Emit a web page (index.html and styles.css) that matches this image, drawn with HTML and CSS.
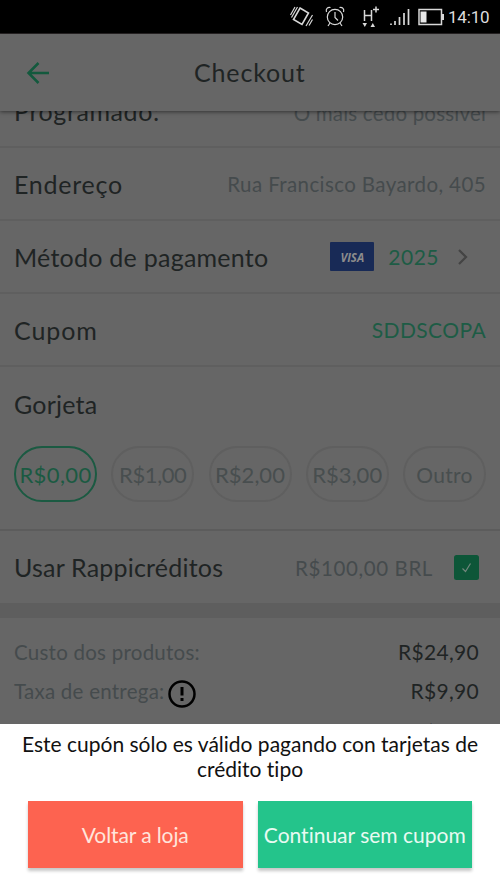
FILE: index.html
```html
<!DOCTYPE html>
<html lang="pt-BR">
<head>
<meta charset="utf-8">
<title>Checkout</title>
<link rel="stylesheet" href="styles.css">
</head>
<body>
<div class="phone">
  <div class="status">
    <svg class="status-icons" width="164" height="34" viewBox="0 0 164 34" fill="none" stroke="#d8d8d8" stroke-width="1.2">
      <path d="M20 8l8.500 5-6.500 11.500-8.500-5z" stroke-width="1.600"/><path d="M17.500 7l-6 10.500M15 7l-4.500 8M26 26l6.500-11M29 25.500l3.500-6"/>
      <circle cx="55" cy="17" r="7.700"/><path d="M55 12v5.500l3 3M46.500 12c-1-3 1-5 4-4.500M63.500 12c1-3-1-5-4-4.500M50 23l-2 3M60 23l2 3"/>
      <path d="M84.500 10v11M91.500 10v11M84.500 15.500h7M96 6.500v6M93 9.500h6" stroke-width="1.500"/>
      <path d="M82.500 23h4.500l-2.200 4zM90.500 27h4.500l-2.200-4z" fill="#d8d8d8" stroke="none"/>
      <path d="M111 23.500v1.500M115 21v4M119.500 17v8M124 13v12M128.500 9v16" stroke-width="1.700"/>
      <path d="M139 9.500h22.500v15H139z" stroke-width="1.500"/><path d="M140.500 11.500h6v11h-6z" fill="#e8e8e8" stroke="none"/><path d="M163 14v6" stroke-width="2"/>
    </svg>
    <span class="clock">14:10</span>
  </div>
  <header class="header">
    <svg class="back" width="24" height="24" viewBox="0 0 24 24" fill="none" stroke="#13593d" stroke-width="2.500"><path d="M12.500 2L2.500 12l10 10M2.500 12H23"/></svg>
    <h1 class="title">Checkout</h1>
  </header>
  <main class="content">
    <div class="row first"><span class="label programado">Programado:</span><span class="value early">O mais cedo possível</span></div>
    <div class="row"><span class="label endereco">Endereço</span><span class="value address">Rua Francisco Bayardo, 405</span></div>
    <div class="row"><span class="label metodo">Método de pagamento</span>
      <span class="visa">VISA</span><span class="value green year">2025</span>
      <svg class="chevron" width="12" height="18" viewBox="0 0 12 18" fill="none" stroke="#444" stroke-width="2.200"><path d="M2 2l7 7-7 7"/></svg>
    </div>
    <div class="row"><span class="label cupom">Cupom</span><span class="value green code">SDDSCOPA</span></div>
    <section class="tips">
      <h2 class="label gorjeta">Gorjeta</h2>
      <div class="pills">
        <span class="pill selected">R$0,00</span><span class="pill one">R$1,00</span><span class="pill">R$2,00</span><span class="pill">R$3,00</span><span class="pill other">Outro</span>
      </div>
    </section>
    <div class="row credits"><span class="label">Usar Rappicréditos</span><span class="value amount">R$100,00 BRL</span>
      <svg class="check" width="25" height="25" viewBox="0 0 25 25"><rect width="25" height="25" rx="2.500" fill="#0d5638"/><path d="M8.500 13.500l3 3 5-8" fill="none" stroke="#72867d" stroke-width="1.200"/></svg>
    </div>
    <div class="divider"></div>
    <div class="costs">
      <div class="cost"><span class="name">Custo dos produtos:</span><span class="price">R$24,90</span></div>
      <div class="cost"><span class="name">Taxa de entrega:</span>
        <svg class="alert" width="28" height="28" viewBox="0 0 28 28" fill="none" stroke="#000" stroke-width="2.500"><circle cx="14" cy="14" r="12.500"/><path d="M14 7v8.500M14 18v3" stroke-width="3"/></svg>
        <span class="price">R$9,90</span></div>
      <div class="cost last"><span class="name">Gorjeta:</span><span class="price">R$0,00</span></div>
    </div>
  </main>
  <section class="sheet">
    <p class="message">Este cupón sólo es válido pagando con tarjetas de<br>crédito tipo</p>
    <div class="actions"><button class="button red">Voltar a loja</button><button class="button primary">Continuar sem cupom</button></div>
  </section>
</div>
</body>
</html>
```
FILE: styles.css
```css
* { box-sizing: border-box; }
body { margin: 0; font-family: Lato, sans-serif; font-variant-ligatures: none; background: #666; }
.phone { width: 500px; height: 889px; display: flex; flex-direction: column; overflow: hidden; }
.status { height: 34px; flex: none; background: #000; display: flex; align-items: center; padding-left: 280px; border-bottom: 1px solid #292526; }
.status-icons { flex: none; }
.clock { font: 17px/34px Roboto, sans-serif; color: #ddd; margin-left: 4px; letter-spacing: -.2px; }
.header { height: 77px; flex: none; display: flex; align-items: center; padding-left: 26px; background: #666; box-shadow: 0 1px 4px rgba(0,0,0,.5); z-index: 1; }
.title { margin: 0 0 2px 144px; font-size: 25px; font-weight: 400; color: #1f2424; letter-spacing: .85px; }
.content { height: 613px; flex: none; overflow: hidden; }
.row { height: 73px; display: flex; align-items: center; padding: 0 14px; border-bottom: 2px solid #5f5f5f; white-space: nowrap; }
.row.first { height: 37px; align-items: flex-end; padding-bottom: 20px; }
.label { margin: 0; font-size: 25px; font-weight: 400; line-height: 30px; color: #1f2424; letter-spacing: .2px; }
.programado { letter-spacing: .6px; }
.endereco { letter-spacing: .75px; }
.metodo { letter-spacing: .25px; }
.cupom { letter-spacing: .9px; }
.value { margin-left: auto; padding-top: 1px; font-size: 20.5px; line-height: 26px; color: #454b4d; letter-spacing: .4px; }
.early { letter-spacing: .2px; }
.green { color: #1d5c45; }
.code { font-size: 21px; letter-spacing: .4px; }
.visa { width: 44px; height: 29px; margin-left: auto; background: #182a56; color: #8c8c8c; border-radius: 1px; text-align: center; font: italic 700 11.5px/31px "Open Sans", sans-serif; }
.year { margin-left: 14px; font-size: 21px; letter-spacing: .5px; }
.chevron { margin: 0 17px 0 18px; }
.tips { height: 164px; padding: 22px 14px 0; border-bottom: 2px solid #5c5c5c; }
.pills { display: flex; justify-content: space-between; margin-top: 27px; }
.pill { width: 83px; height: 56px; border: 2px solid #5f5f5f; border-radius: 28px; display: flex; align-items: center; justify-content: center; font-size: 22px; color: #484e4f; white-space: nowrap; }
.selected { border-color: #1b5a42; color: #1b5a42; letter-spacing: .4px; }
.one { letter-spacing: -.4px; }
.other { font-size: 21px; letter-spacing: .3px; }
.credits { height: 72px; padding-right: 21px; border-bottom: 0; }
.amount { margin-right: 21px; letter-spacing: .6px; }
.divider { height: 15px; background: #5e5e5e; }
.costs { padding: 14px 21px 0 14px; }
.cost { height: 39px; display: flex; align-items: center; }
.last { margin-top: 3px; }
.name { font-size: 20.5px; color: #454b4d; letter-spacing: .25px; }
.price { margin-left: auto; font-size: 21px; color: #1f2424; letter-spacing: .3px; }
.alert { margin: 7px 0 0 4px; }
.sheet { height: 165px; flex: none; background: #fff; }
.message { margin: 0; padding-top: 7px; text-align: center; font-size: 21px; line-height: 25px; color: #111; white-space: nowrap; }
.actions { display: flex; gap: 15px; padding: 20px 28px 0; }
.button { flex: 1; height: 67px; padding: 0; border: 0; font: 21px Lato, sans-serif; font-variant-ligatures: none; color: #e8faf2; box-shadow: 0 3px 3px rgba(0,0,0,.22); white-space: nowrap; }
.red { background: #fd6350; color: #ffe5dc; letter-spacing: -.1px; }
.primary { background: #24c48b; }
```
